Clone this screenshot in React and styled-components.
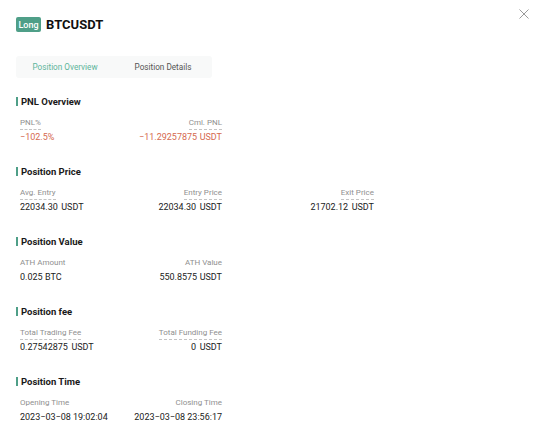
import React from "react";
import styled, { createGlobalStyle } from "styled-components";

const Global = createGlobalStyle`
  html, body { margin: 0; padding: 0; background: #fff; }
  body { font-family: Roboto, "Noto Sans", Arial, sans-serif; color: #1d1d1d; }
  * { box-sizing: border-box; }
`;

const Page = styled.div`
  position: relative;
  width: 540px;
  height: 437px;
  padding: 17px 16px 0 16px;
  background: #fff;
`;

const Close = styled.button`
  position: absolute;
  top: 8px;
  right: 10px;
  width: 12px;
  height: 12px;
  padding: 0;
  border: none;
  background: transparent;
  display: flex;
`;

const Header = styled.div`
  display: flex;
  align-items: center;
  gap: 5px;
  height: 15px;
`;

const Badge = styled.span`
  display: inline-flex;
  align-items: center;
  justify-content: center;
  height: 15px;
  padding: 0 2.5px;
  border-radius: 2px;
  background: #4f9f88;
  color: #fff;
  font-size: 9px;
  font-weight: 500;
`;

const Symbol = styled.span`
  font-size: 13px;
  font-weight: 700;
  color: #111;
`;

const Tabs = styled.div`
  display: grid;
  grid-template-columns: 1fr 1fr;
  width: 196px;
  height: 22px;
  margin-top: 24px;
  background: #f8f9f9;
  border-radius: 3px;
`;

const Tab = styled.div`
  display: flex;
  align-items: center;
  justify-content: center;
  font-size: 8.2px;
  color: ${(p) => (p.$active ? "#5db59b" : "#555")};
`;

const Sections = styled.div`
  margin-top: 17px;
  display: flex;
  flex-direction: column;
  gap: 22px;
`;

const Section = styled.div`
  display: flex;
  flex-direction: column;
`;

const Title = styled.div`
  display: flex;
  align-items: center;
  gap: 3px;
  height: 13px;
  font-size: 9.5px;
  font-weight: 700;
  color: #1a1a1a;
  &::before {
    content: "";
    width: 2px;
    height: 9px;
    background: #4f9f88;
  }
`;

const Grid = styled.div`
  display: grid;
  grid-template-columns: 101px 101px 152px;
  margin-top: 10px;
  padding-left: 4px;
`;

const Cell = styled.div`
  display: flex;
  flex-direction: column;
  align-items: ${(p) => (p.$first ? "flex-start" : "flex-end")};
  gap: 2px;
  white-space: nowrap;
`;

const Label = styled.span`
  font-size: 8px;
  color: #8f8f8f;
  line-height: 10px;
  padding-bottom: 1px;
  border-bottom: ${(p) => (p.$dashed ? "1px dashed #c4c4c4" : "1px solid transparent")};
`;

const Value = styled.span`
  font-size: 9px;
  line-height: 11px;
  color: ${(p) => (p.$red ? "#d5694f" : "#222")};
  display: flex;
  gap: ${(p) => (p.$wide ? "3.5px" : "2.5px")};
`;

const sections = [
  {
    title: "PNL Overview",
    items: [
      { label: "PNL%", dashed: true, value: "−102.5%", red: true },
      { label: "Cml. PNL", dashed: true, value: "−11.29257875", unit: "USDT", red: true },
    ],
  },
  {
    title: "Position Price",
    items: [
      { label: "Avg. Entry", dashed: true, value: "22034.30", unit: "USDT", wide: true },
      { label: "Entry Price", dashed: true, value: "22034.30", unit: "USDT", wide: true },
      { label: "Exit Price", dashed: true, value: "21702.12", unit: "USDT", wide: true },
    ],
  },
  {
    title: "Position Value",
    items: [
      { label: "ATH Amount", value: "0.025", unit: "BTC" },
      { label: "ATH Value", value: "550.8575", unit: "USDT" },
    ],
  },
  {
    title: "Position fee",
    items: [
      { label: "Total Trading Fee", dashed: true, value: "0.27542875", unit: "USDT", wide: true },
      { label: "Total Funding Fee", dashed: true, value: "0", unit: "USDT", wide: true },
    ],
  },
  {
    title: "Position Time",
    items: [
      { label: "Opening Time", value: "2023−03−08 19:02:04" },
      { label: "Closing Time", value: "2023−03−08 23:56:17" },
    ],
  },
];

export default function App() {
  return (
    <>
      <Global />
      <Page>
        <Close aria-label="close">
          <svg width="12" height="12" viewBox="0 0 12 12">
            <path d="M1.5 1.5L10.5 10.5M10.5 1.5L1.5 10.5" stroke="#9a9a9a" strokeWidth="1" fill="none" />
          </svg>
        </Close>
        <Header>
          <Badge>Long</Badge>
          <Symbol>BTCUSDT</Symbol>
        </Header>
        <Tabs>
          <Tab $active>Position Overview</Tab>
          <Tab>Position Details</Tab>
        </Tabs>
        <Sections>
          {sections.map((s) => (
            <Section key={s.title}>
              <Title>{s.title}</Title>
              <Grid>
                {s.items.map((it, i) => (
                  <Cell key={it.label} $first={i === 0}>
                    <Label $dashed={it.dashed}>{it.label}</Label>
                    <Value $red={it.red} $wide={it.wide}>
                      <span>{it.value}</span>
                      {it.unit && <span>{it.unit}</span>}
                    </Value>
                  </Cell>
                ))}
              </Grid>
            </Section>
          ))}
        </Sections>
      </Page>
    </>
  );
}
